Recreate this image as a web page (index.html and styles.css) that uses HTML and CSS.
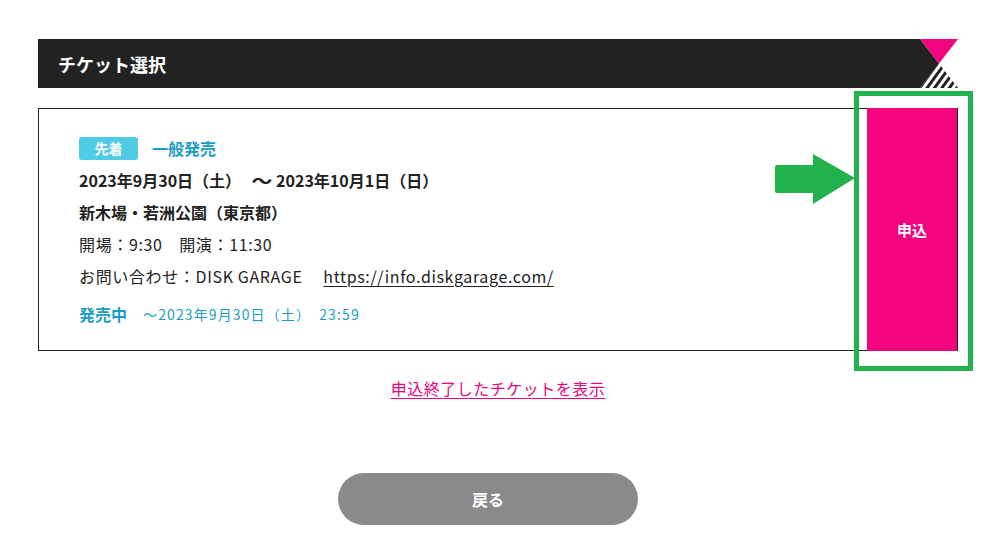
FILE: index.html
```html
<!DOCTYPE html>
<html lang="ja">
<head>
<meta charset="utf-8">
<title>チケット選択</title>
<link rel="stylesheet" href="styles.css">
</head>
<body>
<div class="page">
  <div class="header">
    <div class="header-bar">チケット選択</div>
    <svg class="header-deco" width="38" height="49" viewBox="0 0 38 49">
      <defs>
        <pattern id="hatch" width="6" height="6" patternUnits="userSpaceOnUse" patternTransform="rotate(36)">
          <rect width="6" height="6" fill="#222"/>
          <rect width="3" height="6" fill="#fff"/>
        </pattern>
      </defs>
      <polygon points="0,0 19,24.5 0,49" fill="#222"/>
      <polygon points="0,0 38,0 19,24.5" fill="#f2047f"/>
      <polygon points="19,24.5 38,49 0,49" fill="url(#hatch)"/>
    </svg>
  </div>

  <div class="card">
    <div class="card-body">
      <div class="row badge-row">
        <span class="badge">先着</span><span class="sale-type">一般発売</span>
      </div>
      <div class="row bold">2023年9月30日（土）<span class="tilde">～</span>2023年10月1日（日）</div>
      <div class="row bold">新木場・若洲公園（東京都）</div>
      <div class="row spaced">開場：9:30　開演：11:30</div>
      <div class="row spaced">お問い合わせ：DISK GARAGE　 <a class="info-link" href="#">https://info.diskgarage.com/</a></div>
      <div class="row status"><span class="status-label">発売中</span><span class="status-date">～2023年9月30日（土）　23:59</span></div>
    </div>
    <a class="apply-btn" href="#">申込</a>
  </div>

  <div class="ended">
    <a class="ended-link" href="#">申込終了したチケットを表示</a>
  </div>

  <div class="back-wrap">
    <a class="back-btn" href="#">戻る</a>
  </div>

  <div class="highlight"></div>
  <svg class="arrow" width="80" height="50" viewBox="0 0 80 50">
    <rect x="0" y="11" width="39" height="28" rx="2" fill="#22b24c"/>
    <polygon points="38,0 80,24 38,50" fill="#22b24c"/>
  </svg>
</div>
</body>
</html>
```

FILE: styles.css
```css
* {
  box-sizing: border-box;
}

html, body {
  margin: 0;
  padding: 0;
  background: #fff;
}

body {
  font-family: "Noto Sans CJK JP", "Noto Sans", sans-serif;
  color: #222;
}

.page {
  position: relative;
  width: 1003px;
  height: 546px;
  padding: 39px 45px 0 38px;
}

.header {
  display: flex;
  height: 49px;
  width: 920px;
}

.header-bar {
  flex: 1;
  background: #222;
  color: #fff;
  font-size: 18px;
  font-weight: 700;
  display: flex;
  align-items: center;
  padding-left: 20px;
}

.header-deco {
  display: block;
  flex: none;
}

.card {
  margin-top: 20px;
  width: 920px;
  height: 243px;
  border: 1px solid #222;
  display: flex;
}

.card-body {
  flex: 1;
  padding: 23px 0 0 40px;
}

.row {
  height: 32px;
  line-height: 32px;
  font-size: 16px;
  white-space: nowrap;
}

.badge-row {
  display: flex;
  align-items: center;
}

.bold {
  font-weight: 700;
}

.spaced {
  letter-spacing: 0.04em;
}

.tilde {
  display: inline-block;
  margin: 0 6px 0 13px;
  font-weight: 700;
  transform: scaleX(1.3);
}

.badge {
  display: inline-flex;
  align-items: center;
  justify-content: center;
  width: 59px;
  height: 23px;
  border-radius: 3px;
  background: #4ecce4;
  color: #fff;
  font-size: 14px;
  font-weight: 700;
}

.sale-type {
  margin-left: 14px;
  color: #1d9cc3;
  font-weight: 700;
  font-size: 16px;
}

.info-link {
  color: #222;
  text-decoration: underline;
  text-underline-offset: 3px;
}

.status {
  margin-top: 6px;
  color: #1d9cc3;
  display: flex;
  align-items: center;
}

.status-label {
  font-weight: 700;
}

.status-date {
  margin-left: 16px;
  font-size: 14px;
  letter-spacing: 0.08em;
}

.apply-btn {
  flex: none;
  width: 90px;
  margin: -1px 0;
  background: #f2047f;
  color: #fff;
  font-weight: 700;
  font-size: 15px;
  text-decoration: none;
  display: flex;
  align-items: center;
  justify-content: center;
}

.ended {
  width: 920px;
  margin-top: 25px;
  text-align: center;
  line-height: 24px;
}

.ended-link {
  color: #e8077f;
  font-size: 16px;
  letter-spacing: 0.5px;
  text-decoration: underline;
  text-underline-offset: 3px;
}

.back-wrap {
  margin-top: 73px;
  padding-left: 300px;
}

.back-btn {
  display: flex;
  align-items: center;
  justify-content: center;
  width: 300px;
  height: 52px;
  border-radius: 26px;
  background: #8a8a8a;
  color: #fff;
  font-weight: 700;
  font-size: 16px;
  text-decoration: none;
}

.highlight {
  position: absolute;
  left: 854px;
  top: 91px;
  width: 119px;
  height: 280px;
  border: 5px solid #22b24c;
}

.arrow {
  position: absolute;
  left: 775px;
  top: 154px;
  display: block;
}
```
